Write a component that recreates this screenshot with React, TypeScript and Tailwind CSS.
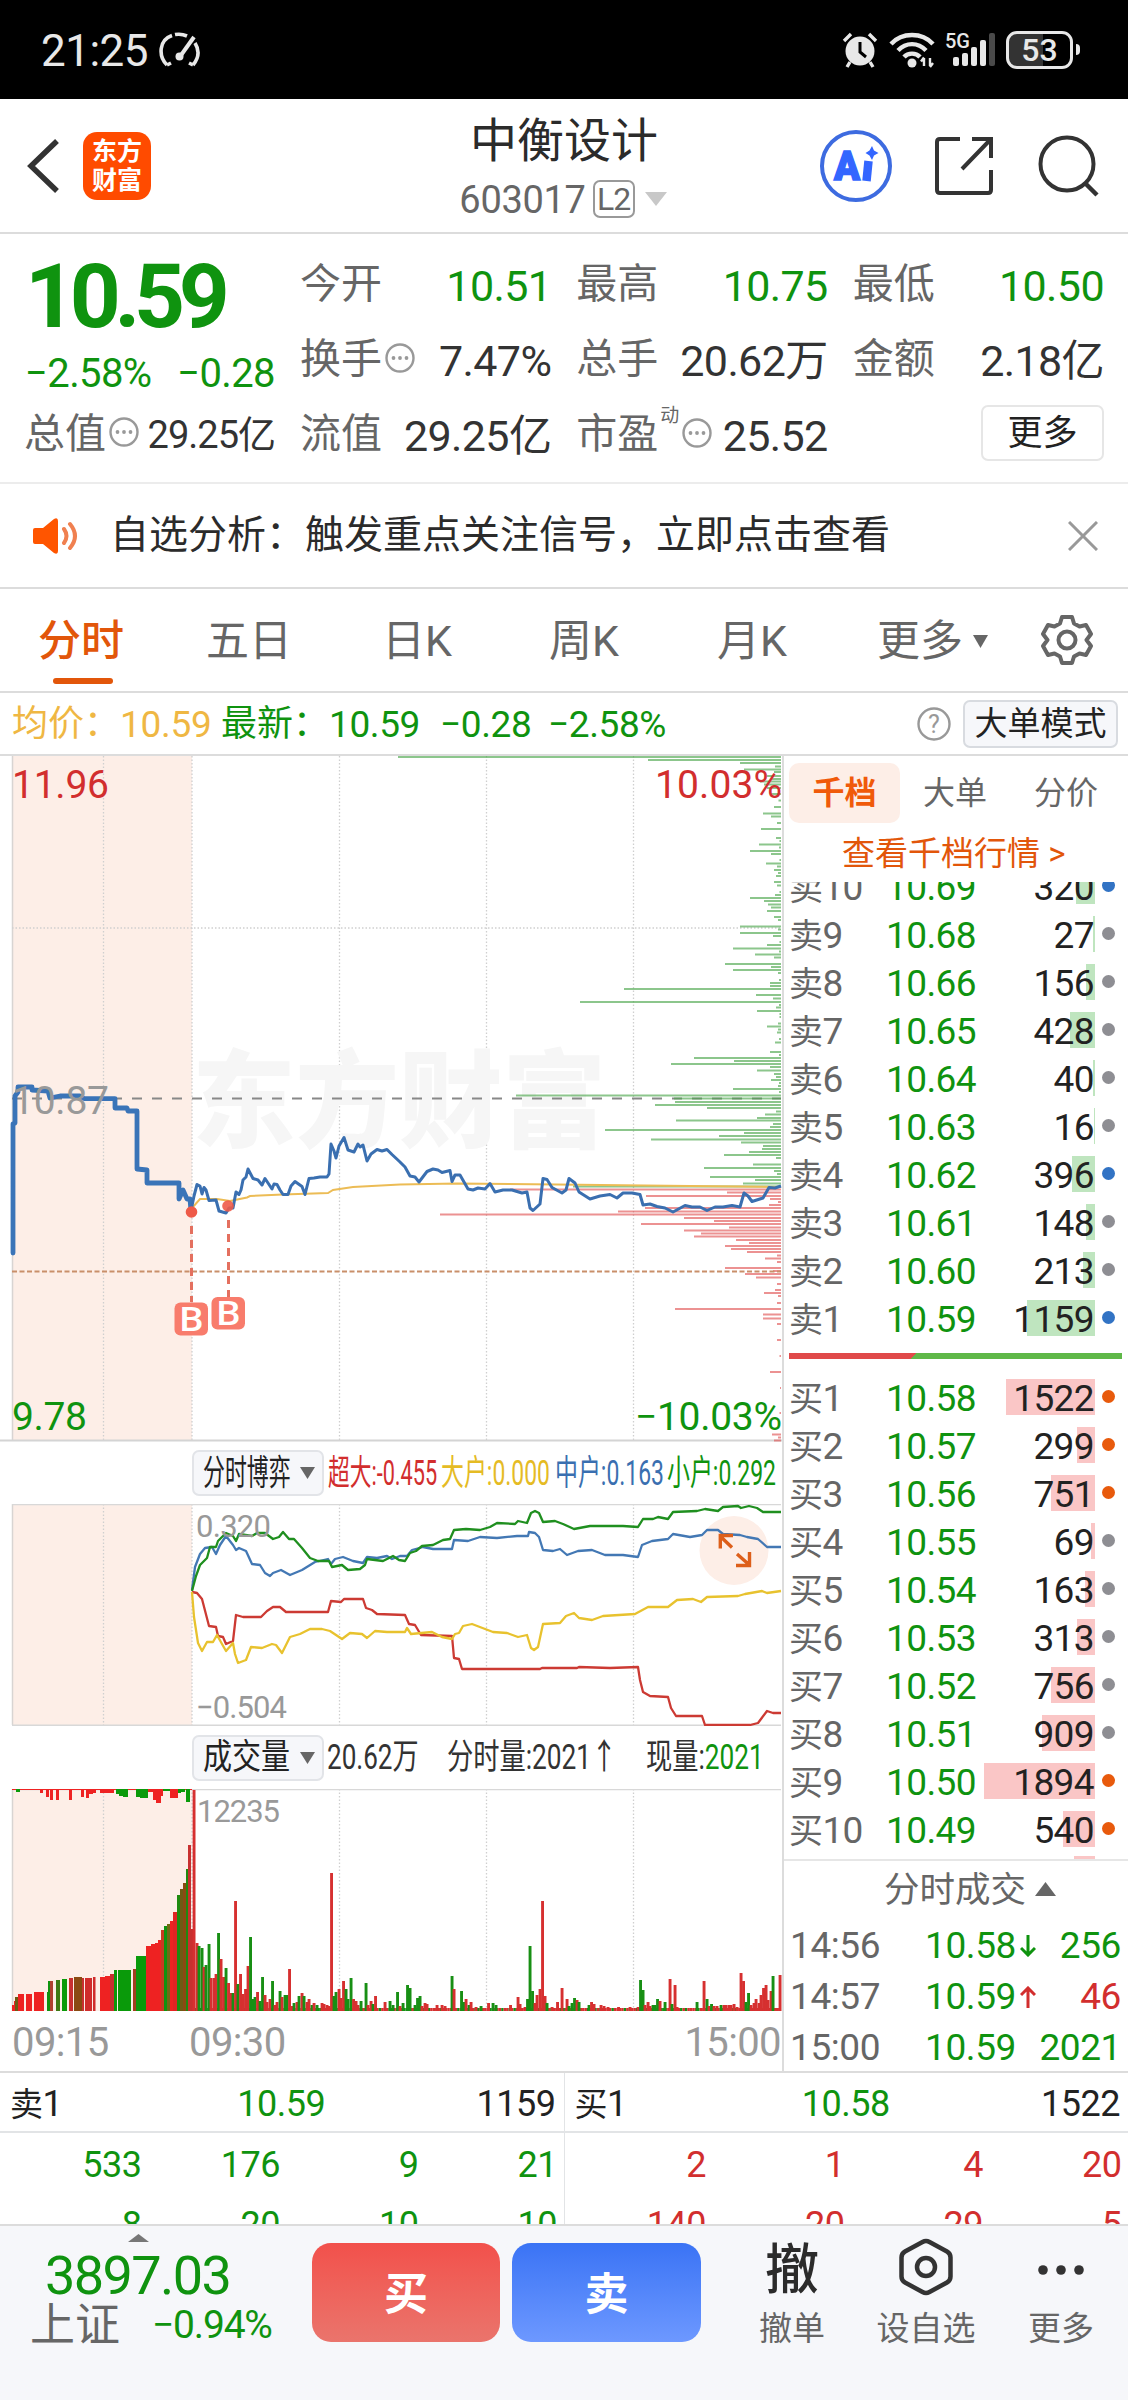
import type { ReactNode } from "react";
import clsx from "clsx";

type Bar = [number, number, "r" | "g"];
type Level = { label: string; price: string; volume: number; dot: "blue" | "gray" | "orange" };

const GREEN = "#0f930f";
const RED = "#d22e2e";

const asks: Level[] = [
  { label: "卖10", price: "10.69", volume: 320, dot: "blue" },
  { label: "卖9", price: "10.68", volume: 27, dot: "gray" },
  { label: "卖8", price: "10.66", volume: 156, dot: "gray" },
  { label: "卖7", price: "10.65", volume: 428, dot: "gray" },
  { label: "卖6", price: "10.64", volume: 40, dot: "gray" },
  { label: "卖5", price: "10.63", volume: 16, dot: "gray" },
  { label: "卖4", price: "10.62", volume: 396, dot: "blue" },
  { label: "卖3", price: "10.61", volume: 148, dot: "gray" },
  { label: "卖2", price: "10.60", volume: 213, dot: "gray" },
  { label: "卖1", price: "10.59", volume: 1159, dot: "blue" },
];

const bids: Level[] = [
  { label: "买1", price: "10.58", volume: 1522, dot: "orange" },
  { label: "买2", price: "10.57", volume: 299, dot: "orange" },
  { label: "买3", price: "10.56", volume: 751, dot: "orange" },
  { label: "买4", price: "10.55", volume: 69, dot: "gray" },
  { label: "买5", price: "10.54", volume: 163, dot: "gray" },
  { label: "买6", price: "10.53", volume: 313, dot: "gray" },
  { label: "买7", price: "10.52", volume: 756, dot: "gray" },
  { label: "买8", price: "10.51", volume: 909, dot: "gray" },
  { label: "买9", price: "10.50", volume: 1894, dot: "orange" },
  { label: "买10", price: "10.49", volume: 540, dot: "orange" },
];

// [y, width] of every price level with resting orders
const askDepth: [number, number][] = [
  [757, 383], [760, 133], [763, 41], [766.5, 6], [769.5, 37], [772, 7], [776, 14], [779, 9], [781.5, 21],
  [784.5, 17], [788, 14], [794, 10], [800.5, 2.5], [807, 7], [813.5, 18], [816.5, 10], [823, 4], [829, 20],
  [838, 5], [841, 1.5], [844.5, 22], [847.5, 2], [851, 31], [854, 10], [860, 1.5], [863.5, 15], [866.5, 4],
  [870, 7], [873, 3], [876, 5], [882, 7], [885.5, 4], [892, 1.5], [895, 6], [898, 31], [901, 17],
  [904.5, 13], [907.5, 10], [911, 14], [917, 7], [920, 3], [926.5, 41], [929.5, 3], [933, 41], [936, 8],
  [942, 1.5], [945, 14], [948.5, 48], [951.5, 2], [954.5, 26], [957.5, 7], [964, 56], [967, 10], [970, 48],
  [973, 3], [980, 2], [983, 11], [986, 11], [989, 157], [995, 25], [998.5, 8], [1002, 201], [1005, 2],
  [1007.5, 5], [1011, 24], [1014, 1.5], [1017, 1.5], [1023.5, 3], [1026.5, 14], [1029.5, 3], [1032.5, 4],
  [1039, 2], [1042.5, 6], [1052, 11], [1055, 2], [1058, 87], [1061, 47], [1064, 110], [1067, 11],
  [1070.5, 24], [1074, 7], [1077, 5], [1080, 10], [1083, 2], [1086, 3], [1089, 48], [1092, 2], [1095.5, 265],
  [1098.5, 107], [1102, 106], [1105, 126], [1108, 74], [1111.5, 5], [1114.5, 16], [1118, 24], [1120.5, 105],
  [1124, 8], [1127, 11], [1130, 176], [1133, 37], [1136, 62], [1139.5, 130], [1142.5, 40], [1146, 18],
  [1149, 19], [1152, 32], [1155, 57], [1158, 5], [1164.5, 28], [1168, 77], [1171, 7], [1174, 4], [1177, 71],
  [1180, 26], [1183.5, 38], [1186.5, 208],
];

const bidDepth: [number, number][] = [
  [1189.5, 271], [1192.5, 54], [1196, 135], [1199, 11], [1202, 3], [1205, 12], [1208, 136], [1211.5, 163],
  [1214.5, 341], [1218, 97], [1221, 67], [1224, 140], [1227.5, 52], [1230.5, 97], [1233.5, 80], [1236.5, 87],
  [1240, 45], [1243, 32], [1246, 56], [1249, 50], [1252, 34], [1255.5, 4], [1258.5, 16], [1262, 4],
  [1268, 56], [1271, 8], [1274, 36], [1277.5, 25], [1284, 4], [1290, 6], [1293, 17], [1296, 3], [1303, 4],
  [1309, 106], [1314.5, 18], [1318.5, 18], [1324, 4], [1340, 4], [1356, 1.5], [1372, 11], [1388, 1],
  [1413, 1.5], [1434.5, 9], [1437.5, 3], [1440.5, 7],
];

const auctionLine =
  "13,1253 13,1124 15,1123 15,1096 18,1092 18,1087 32,1087 32,1090 48,1091 50,1098 60,1096 80,1096 84,1098.6 115,1098.6 115,1108 127,1108 128,1111 137,1111 137,1169 147,1170 147,1183 179,1183 179,1199 183,1190 187,1199 190,1199 191,1211";

const priceLine =
  "191,1211 194,1196 197,1184.5 200,1186 202,1194 204,1187.5 206,1190 209,1200.5 216,1200 219,1211 226,1213 229,1208 233,1208 236,1192 239,1194.5 241,1190 243,1180 246,1177 248,1169 253,1178.5 258,1180 262,1185 265,1178.5 268,1183 272,1189 274,1184 277,1184.5 280,1190 283,1194.5 288,1194.5 291,1186 295,1181.5 302,1186.5 305,1194.5 309,1178.5 314,1178 320,1177 327,1177 329,1174 331,1144 334,1151 336,1158 339,1146 344,1137.5 348,1150 354,1152 358,1144 360,1147 363,1145 367,1161 371,1154 377,1149.5 382,1151 387,1149.5 392,1154.5 400,1162 405,1167 410,1176 415,1177 419,1182 427,1171.5 433,1169 438,1170 442,1172.5 450,1170.5 452,1181.5 455,1175 460,1175 468,1189 473,1190 478,1188 485,1189 490,1183.5 495,1192 503,1190 512,1190 522,1193 527,1192 530,1208 533,1210.5 540,1204 543,1178.5 547,1179.5 552,1187.5 562,1193 566,1190 569,1178.5 575,1183 579,1192 590,1199 600,1196 610,1194.5 617,1198 623,1193 632,1193 640,1194.5 643,1205 650,1204 657,1206.5 665,1208 673,1212 685,1205.5 692,1207 700,1207 707,1210.5 715,1207 723,1207 732,1205.5 740,1207 744,1193 748,1196 752,1201.5 763,1198 769,1187.5 775,1188 781,1186";

const averageLine =
  "192,1208 200,1199 217,1199 230,1201 247,1197.5 250,1196 283,1194.5 328,1193 333,1190 353,1187 400,1184.5 457,1183.5 557,1184.5 690,1186 781,1187";

const smallLine =
  "192,1591 196,1576 200,1565 207,1558 210,1547 216,1547 218,1541 226,1533 233,1536 236,1541 239,1534 252,1536 257,1533 265,1533 273,1539 279,1537 283,1532 289,1539 294,1539 302,1548 310,1558 318,1561 329,1561 332,1567 342,1565 348,1570 360,1569 365,1565 367,1559 383,1561 393,1556 399,1560 405,1561 410,1553 416,1551 422,1546 433,1545 443,1540 450,1539 454,1530 466,1529 480,1530 490,1527 497,1523 515,1524 518,1521 527,1523 531,1513 535,1511 539,1513 543,1522 555,1521 563,1524 574,1529 590,1526 623,1526 638,1527 643,1519 653,1519 658,1517 668,1519 673,1512 697,1511 705,1509 718,1511 723,1507 738,1506 741,1508 749,1506 757,1508 763,1512 781,1512";

const midLine =
  "192,1590 195,1567 200,1554 205,1548 212,1547 216,1554 220,1545 226,1536 233,1545 236,1550 239,1548 246,1551 252,1564 260,1565 265,1573 270,1576 273,1573 281,1570 290,1575 302,1570 315,1562 328,1559 331,1564 335,1559 343,1557 353,1561 363,1563 367,1557 377,1558 387,1556 392,1559 400,1556 407,1556 412,1550 423,1547 433,1549 452,1549 454,1540 468,1541 480,1537 497,1538 517,1536 528,1536 529,1532 535,1533 539,1537 543,1550 553,1551 560,1549 567,1555 578,1551 592,1550 605,1555 623,1555 638,1557 642,1545 652,1541 668,1539 673,1534 690,1537 702,1535 707,1530 718,1530 723,1534 740,1535 747,1537 758,1539 767,1547 781,1547";

const superLine =
  "192,1592 197,1593 202,1599 209,1626 216,1627 218,1636 223,1637 226,1644 233,1641 236,1615 243,1617 261,1617 267,1611 273,1607 280,1607 286,1612 328,1612 331,1601 341,1602 344,1599 363,1599 366,1608 372,1610 377,1614 405,1615 409,1624 415,1625 421,1635 452,1636 454,1658 459,1659 462,1669 540,1669 542,1668 577,1668 579,1667 610,1668 638,1667 640,1680 643,1692 650,1696 668,1697 671,1708 676,1716 702,1716 705,1725 750,1725 758,1723 767,1711 773,1713 781,1713";

const bigLine =
  "192,1592 194,1617 198,1643 202,1651 207,1642 213,1642 217,1635 222,1644 226,1651 233,1643 235,1654 238,1663 246,1660 251,1647 262,1648 272,1644 276,1645 282,1653 290,1637 300,1634 310,1629 322,1629 330,1631 342,1639 350,1633 362,1634 367,1638 375,1631 387,1632 405,1632 407,1628 411,1634 432,1632 442,1637 452,1639 455,1634 459,1633 463,1626 472,1624 493,1632 507,1633 518,1637 527,1635 531,1648 534,1650 538,1647 543,1624 560,1623 566,1616 574,1613 579,1618 592,1620 603,1616 635,1614 648,1607 668,1607 677,1600 693,1599 701,1602 707,1597 738,1596 745,1594 762,1591 767,1593 781,1591";

// call auction volume: [x, width, height, colour]
const auctionBars: [number, number, number, string][] = [
  [12, 2, 6, "#ee2222"], [14, 2, 10, "#ee2222"], [15, 3, 14, "#6b5a14"], [18, 6, 17, "#ee2222"],
  [26, 6, 17, "#ee2222"], [34, 10, 19, "#ee2222"], [47, 2, 19, "#0f930f"], [48, 2, 30, "#0f930f"],
  [50, 3, 30, "#b04030"], [56, 4, 31, "#3d7a14"], [62, 5, 32, "#0a9a0a"], [69, 4, 33, "#c83030"],
  [74, 8, 34, "#8a4a12"], [82, 2, 33, "#c83030"], [85, 7, 33, "#d02c2c"], [93, 2.5, 34, "#d02c2c"],
  [100, 5, 34, "#ee2222"], [105, 5, 35, "#ee2222"], [110, 4, 37, "#c83030"], [114, 3, 41, "#0a9a0a"],
  [118, 13, 41, "#0a9a0a"], [133, 3, 42, "#a04020"], [136, 10, 55, "#0a9a0a"], [146, 5, 65, "#ee2222"],
  [151, 4, 67, "#ee2222"], [155, 3, 68, "#ee2222"], [158, 3, 71, "#ee2222"], [161, 3, 81, "#c83a22"],
  [164, 3, 85, "#0f930f"], [167, 3, 87, "#6f6a14"], [170, 3, 90, "#ee2222"], [173, 4, 99, "#e02424"],
  [177, 3, 116, "#1f8a0f"], [180, 3, 122, "#6f5a14"], [183, 3, 128, "#8a4a12"], [186, 2, 142, "#1f8a0f"],
  [188, 3, 166, "#c83030"], [190.5, 2.5, 82, "#c83030"],
];

// unmatched auction volume, hanging from the top edge
const unmatchedBars: [number, number, number, "r" | "g"][] = [
  [12, 180, 1, "r"], [16, 4, 3, "g"], [40, 3, 4, "r"], [46, 3, 8, "r"], [50, 3, 11, "r"], [56, 3, 11, "r"],
  [69, 3, 11, "r"], [81, 3, 8, "r"], [86, 3, 9, "r"], [89, 4, 5, "r"], [93, 3, 4, "r"], [100, 14, 4, "r"],
  [116, 4, 5, "g"], [119, 4, 7, "g"], [123, 5, 8, "g"], [136, 4, 8, "g"], [140, 8, 9, "g"], [148, 5, 3, "r"],
  [153, 3, 11, "r"], [156, 5, 14, "r"], [161, 2, 7, "r"], [163, 8, 2, "g"], [170, 8, 9, "r"],
  [178, 3, 4, "g"], [181, 4, 3, "g"], [186, 4, 13, "g"],
];

const minuteBars: Bar[] = [
  [194, 221, "r"], [197, 68, "r"], [199, 65, "g"], [202, 63, "g"], [204, 44, "r"], [206, 46, "g"],
  [209, 67, "g"], [211, 33, "r"], [214, 33, "r"], [216, 37, "r"], [218.5, 78, "g"], [221, 52, "r"],
  [223.5, 34, "r"], [226, 43, "g"], [228.5, 28, "r"], [231, 18, "r"], [233, 18, "g"], [235.5, 110, "r"],
  [238, 27, "g"], [240.5, 37, "r"], [243, 17, "r"], [245.5, 22, "r"], [248, 45, "r"], [250.5, 74, "g"],
  [253, 12, "g"], [255, 14, "g"], [257.5, 19, "r"], [260, 10, "g"], [262.5, 34, "g"], [265, 16, "r"],
  [267, 9, "r"], [270, 12, "r"], [272.5, 30, "g"], [275, 6, "r"], [277, 9, "r"], [280, 20, "g"],
  [282, 14, "r"], [285, 16, "g"], [287, 16, "g"], [289.5, 42, "r"], [292, 5, "r"], [294, 8, "g"],
  [297, 9, "r"], [299, 15, "g"], [302, 18, "r"], [304, 15, "g"], [307, 9, "r"], [309, 12, "r"],
  [312, 6, "g"], [314, 8, "r"], [317, 6, "g"], [322, 8, "r"], [324, 7, "r"], [327, 6, "r"], [329, 5, "r"],
  [331.5, 138, "r"], [334, 15, "g"], [336, 19, "g"], [339, 22, "r"], [341, 13, "r"], [343.5, 30, "r"],
  [346, 22, "g"], [348, 12, "g"], [351, 33, "g"], [353.5, 12, "r"], [356, 10, "r"], [358, 6, "r"],
  [361, 10, "g"], [366, 28, "g"], [368, 6, "r"], [371, 10, "r"], [373, 7, "g"], [375.5, 15, "r"],
  [385, 9, "r"], [390, 10, "g"], [393, 6, "g"], [397.5, 19, "g"], [400, 5, "r"], [403, 8, "g"],
  [407.5, 26, "g"], [410, 23, "g"], [415, 6, "g"], [417.5, 13, "g"], [420, 15, "g"], [422, 5, "r"],
  [425, 8, "r"], [427, 7, "r"], [437, 6, "r"], [442, 6, "r"], [445, 5, "r"], [452, 35, "g"], [454, 22, "r"],
  [461.5, 20, "g"], [464, 9, "g"], [466, 12, "r"], [469, 6, "g"], [471, 9, "r"], [476, 4, "r"],
  [481, 5, "g"], [488.5, 8, "r"], [493, 8, "g"], [496, 6, "g"], [510.5, 6, "r"], [518, 14, "r"],
  [520, 7, "r"], [525, 4, "r"], [527.5, 12, "g"], [530, 65, "g"], [532.5, 20, "g"], [535, 8, "r"],
  [537, 16, "r"], [540, 22, "r"], [542.5, 110, "r"], [545, 15, "r"], [547, 8, "g"], [552, 4, "r"],
  [557.5, 9, "r"], [562, 23, "r"], [567, 12, "r"], [569, 5, "g"], [572, 8, "g"], [574.5, 13, "g"],
  [577, 11, "r"], [579, 9, "g"], [589, 6, "g"], [591.5, 9, "r"], [594, 7, "r"], [601, 6, "r"],
  [604, 5, "r"], [608, 4, "r"], [618.5, 4, "r"], [630, 4, "r"], [638, 4, "r"], [640.5, 31, "g"],
  [643, 21, "g"], [645, 6, "r"], [648, 9, "r"], [650, 5, "r"], [653, 6, "g"], [655, 6, "g"],
  [657.5, 12, "g"], [660, 10, "r"], [665, 9, "g"], [670, 32, "r"], [672, 7, "g"], [675, 26, "r"],
  [677, 4, "r"], [697, 9, "g"], [704, 30, "r"], [707, 12, "g"], [709, 5, "r"], [711.5, 7, "g"],
  [714, 5, "r"], [717, 5, "r"], [721, 6, "g"], [724, 6, "r"], [726, 6, "r"], [729, 6, "r"], [731, 6, "r"],
  [734, 7, "r"], [737, 4, "r"], [741, 38, "r"], [743.5, 30, "r"], [746, 9, "g"], [748.5, 18, "g"],
  [751, 6, "r"], [754, 8, "r"], [756, 12, "r"], [759, 8, "r"], [761, 16, "r"], [763.5, 23, "r"],
  [766, 26, "r"], [768, 11, "r"], [771, 20, "r"], [773, 35, "g"], [776, 3, "r"], [780, 36, "r"],
];

function StatusBar() {
  return (
    <div className="flex h-[99px] items-center bg-black pl-[41px] pr-[48px] text-[#e8e8e8]">
      <span className="pt-[2px] text-[44px] leading-none tracking-[-0.5px]">21:25</span>
      <svg className="ml-[11px] h-[36px] w-[42px]" viewBox="0 0 42 36" fill="none" stroke="#e8e8e8" strokeWidth="3.6">
        <path d="M8 33C-1 24 0 8 13 3.500M16 2.600C20 1.800 24 2.200 28 4" />
        <path d="M36 11C41 19 39 27 34 33M8 33L12 31M34 33L30 31" />
        <path d="M35 5L20 26" strokeWidth="4" />
        <circle cx="20.500" cy="24.500" r="4" fill="#e8e8e8" stroke="none" />
      </svg>
      <div className="ml-auto flex items-center">
        <svg className="h-[36px] w-[36px]" viewBox="0 0 36 36">
          <circle cx="18" cy="19" r="14.500" fill="#e8e8e8" />
          <path d="M2 9L9 2M34 9L27 2M8 30L5 35M28 30L31 35" stroke="#e8e8e8" strokeWidth="3.400" />
          <path d="M18 10V20L24 25" fill="none" stroke="#000" strokeWidth="3" />
        </svg>
        <svg className="ml-[11px] h-[36px] w-[46px]" viewBox="0 0 46 36" fill="none" stroke="#e8e8e8" strokeWidth="4.400">
          <path d="M2 12C13 0 33 0 44 12" />
          <path d="M9 18.500C17 10 29 10 37 18.500" />
          <path d="M15 25C19 20.500 27 20.500 31 25" />
          <circle cx="23" cy="31" r="4.500" fill="#e8e8e8" stroke="none" />
          <path d="M35 26V34M41 26V34M32 29.500L35 25.500M44 31L41 35" strokeWidth="2.400" />
        </svg>
        <svg className="ml-[10px] h-[38px] w-[52px]" viewBox="0 0 52 38">
          <text x="0" y="17" fontSize="21" fontWeight="500" fill="#e8e8e8" textLength="25" lengthAdjust="spacingAndGlyphs">5G</text>
          <rect x="8" y="26" width="6" height="9" rx="2" fill="#e8e8e8" />
          <rect x="17" y="22" width="6" height="13" rx="2" fill="#e8e8e8" />
          <rect x="26" y="16" width="6" height="19" rx="2" fill="#e8e8e8" />
          <rect x="35" y="9" width="6" height="26" rx="2" fill="#e8e8e8" />
          <rect x="44" y="2" width="6" height="33" rx="2" fill="#4a4a4a" />
        </svg>
        <div className="ml-[9px] flex h-[38px] w-[67px] items-center justify-center rounded-[11px] border-[3px] border-[#e8e8e8] bg-[linear-gradient(90deg,#333_55%,#000_55%)] text-[32px] font-medium leading-none">
          53
        </div>
        <div className="ml-[3px] h-[11px] w-[4px] rounded-r bg-[#e8e8e8]" />
      </div>
    </div>
  );
}

function Header() {
  return (
    <header className="flex h-[135px] items-center border-b-2 border-[#dcdcdc] px-[27px]">
      <svg className="h-[56px] w-[34px]" viewBox="0 0 34 56" fill="none" stroke="#333" strokeWidth="5.5">
        <path d="M30 3L4 28L30 53" />
      </svg>
      <div className="ml-[22px] flex h-[68px] w-[68px] flex-col items-center justify-center rounded-[14px] bg-[#ff4b00] text-[25px] font-bold leading-[29px] text-white">
        <span>东方</span>
        <span>财富</span>
      </div>
      <div className="flex w-[826px] flex-col items-center pt-[3px]">
        <h1 className="text-[47px] leading-[54px] text-[#2b2b2b]">中衡设计</h1>
        <div className="mt-[10px] flex items-center text-[38px] leading-[40px] text-[#666]">
          <span className="pt-[2px] tracking-[-0.3px]">603017</span>
          <span className="ml-[7px] flex h-[38px] w-[42px] items-center justify-center rounded-[7px] border-2 border-[#999] text-[32px] leading-none tracking-[-1px]">
            L2
          </span>
          <svg className="ml-[10px] mr-[2px] h-[14px] w-[22px]" viewBox="0 0 22 14">
            <path d="M0 0H22L11 14Z" fill="#c8c8c8" />
          </svg>
        </div>
      </div>
      <svg className="-ml-[158px] h-[74px] w-[74px] shrink-0" viewBox="0 0 74 74">
        <circle cx="37" cy="37" r="34" fill="#fff" stroke="#3d6be0" strokeWidth="4" />
        <text x="15" y="51" fontSize="40" fontWeight="900" fill="#3366ff" stroke="#3366ff" strokeWidth="1.5" textLength="26" lengthAdjust="spacingAndGlyphs">
          A
        </text>
        <path d="M49.500 32L47.500 52" stroke="#3366ff" strokeWidth="8.500" />
        <path d="M53 17L55 21.500L59.500 24L55 26.500L53 31L50.500 26.500L46.500 24L50.500 21.500Z" fill="#3366ff" />
      </svg>
      <svg className="ml-[41px] h-[60px] w-[60px] shrink-0" viewBox="0 0 60 60" fill="none" stroke="#333" strokeWidth="4">
        <path d="M26 3H6Q3 3 3 6V54Q3 57 6 57H54Q57 57 57 54V34" />
        <path d="M38 3H57V22M57 3L28 33" />
      </svg>
      <svg className="ml-[44px] h-[62px] w-[62px] shrink-0" viewBox="0 0 62 62" fill="none" stroke="#333" strokeWidth="4">
        <circle cx="29" cy="29" r="26.500" />
        <path d="M47 48L59 60" strokeWidth="4.500" />
      </svg>
    </header>
  );
}

function InfoDots() {
  return (
    <svg className="h-[30px] w-[30px] shrink-0" viewBox="0 0 30 30">
      <circle cx="15" cy="15" r="13.500" fill="none" stroke="#999" strokeWidth="2.4" />
      <circle cx="8.500" cy="15" r="1.900" fill="#999" />
      <circle cx="15" cy="15" r="1.900" fill="#999" />
      <circle cx="21.500" cy="15" r="1.900" fill="#999" />
    </svg>
  );
}

function Stat({ label, info, sup, value, green }: { label: string; info?: boolean; sup?: string; value?: string; green?: boolean }) {
  return (
    <div className="flex h-[75px] items-center">
      <span className="text-[41px] text-[#666]">{label}</span>
      {sup && <span className="mb-[38px] ml-[2px] text-[19px] text-[#666]">{sup}</span>}
      {info && <span className="mb-[4px] ml-[3px]"><InfoDots /></span>}
      <span className={clsx("ml-auto pt-[3px] text-[43px] tracking-[-0.6px]", green ? "text-[#0f930f]" : "text-[#333]")}>{value}</span>
    </div>
  );
}

function Quote() {
  return (
    <section className="flex h-[250px] border-b-2 border-[#ececec] pl-[25px] pt-[13px] leading-none">
      <div className="w-[250px] text-[#0f930f]">
        <div className="flex h-[98px] items-center text-[89px] font-bold tracking-[-6.3px]">10.59</div>
        <div className="flex h-[54px] items-center justify-between pt-[3px] text-[40px] tracking-[-0.6px]">
          <span>−2.58%</span>
          <span>−0.28</span>
        </div>
        <div className="-ml-px flex h-[70px] items-center">
          <span className="text-[41px] text-[#666]">总值</span>
          <span className="mb-[4px] ml-[3px]"><InfoDots /></span>
          <span className="ml-auto whitespace-nowrap pt-px text-[38px] tracking-[-1px] text-[#333]">29.25亿</span>
        </div>
      </div>
      <div className="ml-[25px] grid w-[804px] grid-cols-3 content-start gap-x-[25px]">
        <Stat label="今开" value="10.51" green />
        <Stat label="最高" value="10.75" green />
        <Stat label="最低" value="10.50" green />
        <Stat label="换手" info value="7.47%" />
        <Stat label="总手" value="20.62万" />
        <Stat label="金额" value="2.18亿" />
        <Stat label="流值" value="29.25亿" />
        <Stat label="市盈" sup="动" info value="25.52" />
        <div className="flex h-[72px] items-center justify-end">
          <button className="h-[56px] w-[123px] rounded-[7px] border-2 border-[#e6e6e6] text-[35px] leading-none text-[#222]">更多</button>
        </div>
      </div>
    </section>
  );
}

function Notice() {
  return (
    <div className="flex h-[105px] items-center border-b-2 border-[#dcdcdc] pl-[33px] pr-[30px]">
      <svg className="h-[38px] w-[46px]" viewBox="0 0 46 38">
        <path d="M2 11H10L21 2Q25 0 25 4V34Q25 38 21 36L10 27H2Q0 27 0 25V13Q0 11 2 11Z" fill="#ff5500" />
        <path d="M31 12Q36 19 31 26M37 7Q47 19 37 31" fill="none" stroke="#f08050" strokeWidth="4" strokeLinecap="round" />
      </svg>
      <span className="ml-[31px] text-[39px] leading-none text-[#2b2b2b]">自选分析：触发重点关注信号，立即点击查看</span>
      <svg className="ml-auto h-[30px] w-[30px]" viewBox="0 0 30 30" stroke="#999" strokeWidth="3">
        <path d="M1 1L29 29M29 1L1 29" />
      </svg>
    </div>
  );
}

function PeriodTabs() {
  return (
    <nav className="flex h-[104px] items-center border-b-2 border-[#dcdcdc] pt-[2px] text-[43px] leading-none text-[#666]">
      <div className="relative ml-[38px] w-[168px] font-medium text-[#e2560a]">
        分时
        <span className="absolute left-[15px] top-[58px] h-[6px] w-[60px] rounded-full bg-[#e2560a]" />
      </div>
      <div className="w-[176px]">五日</div>
      <div className="w-[167px]">日K</div>
      <div className="w-[168px]">周K</div>
      <div className="w-[160px]">月K</div>
      <div className="flex w-[164px] items-center">
        更多
        <svg className="ml-[10px] h-[13px] w-[15px]" viewBox="0 0 15 13">
          <path d="M0 0H15L7.500 13Z" fill="#666" />
        </svg>
      </div>
      <svg className="-mt-[2px] h-[52px] w-[52px]" viewBox="0 0 52 52" fill="none" stroke="#666" strokeWidth="4" strokeLinejoin="round">
        <path d="M21 3H31L33 9.500L38.500 12.500L45 11L50 20L45.500 26L50 32L45 41L38.500 39.500L33 42.500L31 49H21L19 42.500L13.500 39.500L7 41L2 32L6.500 26L2 20L7 11L13.500 12.500L19 9.500Z" />
        <circle cx="26" cy="26" r="8.500" />
      </svg>
    </nav>
  );
}

function PriceBar() {
  return (
    <div className="flex h-[63px] items-center border-b-2 border-[#dcdcdc] pl-[12px] pr-[10px] text-[37px] leading-none">
      <div className="flex w-[209px] pt-[2px] text-[#efb743]">
        <span className="w-[108px] whitespace-nowrap text-[36px]">均价：</span>
        <span className="tracking-[-0.3px]">10.59</span>
      </div>
      <div className="flex pt-[2px] tracking-[-0.4px] text-[#0f930f]">
        <span className="w-[108px] whitespace-nowrap text-[36px] tracking-normal">最新：</span>
        <span className="w-[111px]">10.59</span>
        <span className="w-[108px]">−0.28</span>
        <span>−2.58%</span>
      </div>
      <svg className="ml-auto h-[34px] w-[34px]" viewBox="0 0 34 34">
        <circle cx="17" cy="17" r="15.500" fill="none" stroke="#999" strokeWidth="2.400" />
        <text x="17" y="26" fontSize="25" textAnchor="middle" fill="#999">?</text>
      </svg>
      <div className="ml-[12px] flex h-[48px] w-[155px] items-center justify-center rounded-[7px] border-2 border-[#d8dbe0] bg-[#f6f7fa] text-[33px] text-[#222]">
        大单模式
      </div>
    </div>
  );
}

function GridLines({ top, bottom }: { top: number; bottom: number }) {
  return (
    <g>
      <rect x="12" y={top} width="180" height={bottom - top} fill="#fdeee7" />
      {[103.5, 192, 339.5, 486.5, 633.5].map((x) => (
        <path key={x} d={`M${x} ${top}V${bottom}`} stroke="#cfcfcf" strokeWidth="1.3" strokeDasharray="1.5 2" />
      ))}
      <path d={`M12.500 ${top}V${bottom}`} stroke="#d8d4d2" strokeWidth="1.5" />
    </g>
  );
}

function PriceChart() {
  return (
    <svg className="block h-[686px] w-[782px]" viewBox="0 756 782 686" fill="none">
      <GridLines top={756} bottom={1440} />
      <text x="192" y="1139" fontSize="106" fontWeight="900" fill="#f6f6f6" textLength="414" lengthAdjust="spacingAndGlyphs">
        东方财富
      </text>
      <path d="M12 928H781" stroke="#cfcfcf" strokeWidth="1.3" strokeDasharray="1.5 2" />
      <path d="M12 1098.600H781" stroke="#888" strokeWidth="2" strokeDasharray="10 10" />
      <path d="M0 1440.600H782" stroke="#d4d4d4" strokeWidth="2" />
      <g fill="#4fa84f" fillOpacity="0.65">
        {askDepth.map(([y, w]) => (
          <rect key={y} x={781 - w} y={y - 1} width={w} height="2" />
        ))}
      </g>
      <g fill="#e04a4a" fillOpacity="0.6">
        {bidDepth.map(([y, w]) => (
          <rect key={y} x={781 - w} y={y - 1} width={w} height="2" />
        ))}
      </g>
      <path d="M12 1271.600H781" stroke="#c98f6a" strokeWidth="2" strokeDasharray="5 2.500" />
      <polyline points={averageLine} stroke="#ecbc55" strokeWidth="2" />
      <polyline points={auctionLine} stroke="#3a74b8" strokeWidth="4.8" strokeLinejoin="round" strokeLinecap="round" />
      <polyline points={priceLine} stroke="#3a6fb0" strokeWidth="3" strokeLinejoin="round" />
      <g stroke="#e4705f" strokeWidth="3" strokeDasharray="8 6">
        <path d="M191.500 1226V1302" />
        <path d="M228.500 1220V1297" />
      </g>
      <circle cx="191.500" cy="1212" r="5.800" fill="#ee5a48" />
      <circle cx="228" cy="1206" r="5.800" fill="#ee5a48" fillOpacity="0.9" />
      <rect x="174.500" y="1302.500" width="33.500" height="33" rx="6" fill="#f87c6c" />
      <rect x="211.500" y="1297" width="33.500" height="32.500" rx="6" fill="#f87c6c" />
      <g fontSize="33" fontWeight="500" fill="#fff">
        <text x="179.500" y="1330.500" textLength="24" lengthAdjust="spacingAndGlyphs">B</text>
        <text x="216.500" y="1324.500" textLength="24" lengthAdjust="spacingAndGlyphs">B</text>
      </g>
      <g fontSize="39">
        <text x="12" y="798" fill={RED} textLength="97">11.96</text>
        <text x="12" y="1113.500" fill="#999" textLength="97">10.87</text>
        <text x="12" y="1430" fill={GREEN} textLength="75">9.78</text>
        <text x="655" y="798" fill={RED} textLength="127">10.03%</text>
        <text x="635" y="1430" fill={GREEN} textLength="147">−10.03%</text>
      </g>
    </svg>
  );
}

function IndicatorButton({ children }: { children: ReactNode }) {
  return (
    <div className="flex h-[46px] w-[132px] shrink-0 items-center rounded-[7px] border-2 border-[#e2e4e8] bg-[#f6f7fa] pl-[9px] text-[#222]">
      <span className="w-[87px] shrink-0">{children}</span>
      <svg className="ml-[10px] h-[12px] w-[15px]" viewBox="0 0 15 12">
        <path d="M0 0H15L7.500 12Z" fill="#666" />
      </svg>
    </div>
  );
}

function GameChart() {
  return (
    <div>
      <div className="flex h-[62px] items-center whitespace-nowrap pl-[192px] text-[35px] leading-none">
        <IndicatorButton>
          <span className="inline-block origin-left scale-x-[0.625]">分时博弈</span>
        </IndicatorButton>
        <span className="ml-[4px] w-[113px] shrink-0 text-[#d22e2e]"><span className="inline-block origin-left scale-x-[0.62]">超大:-0.455</span></span>
        <span className="w-[114px] shrink-0 text-[#e5bb24]"><span className="inline-block origin-left scale-x-[0.655]">大户:0.000</span></span>
        <span className="w-[112px] shrink-0 text-[#3a6fb0]"><span className="inline-block origin-left scale-x-[0.655]">中户:0.163</span></span>
        <span className="w-[108px] shrink-0 text-[#0f930f]"><span className="inline-block origin-left scale-x-[0.655]">小户:0.292</span></span>
      </div>
      <svg className="block h-[222px] w-[782px]" viewBox="0 1504 782 222" fill="none">
        <GridLines top={1504} bottom={1725} />
        <path d="M12 1504.500H781M12 1725.300H781" stroke="#d8d8d8" strokeWidth="1.5" />
        <circle cx="734" cy="1550.500" r="34.500" fill="#fdeee7" />
        <g strokeWidth="2.3" strokeLinejoin="round">
          <polyline points={midLine} stroke="#4378b4" />
          <polyline points={smallLine} stroke="#1f8f1f" />
          <polyline points={superLine} stroke="#cc3a33" />
          <polyline points={bigLine} stroke="#e8c22e" />
        </g>
        <path d="M732 1547.500L720 1536M720.300 1548.500V1535.500H733M737 1554L750 1565.500M749.500 1552V1565.500H736" stroke="#dd5f1a" strokeWidth="3.400" />
        <g fontSize="31" fill="#999">
          <text x="196" y="1537" textLength="75">0.320</text>
          <text x="196" y="1718" textLength="91">−0.504</text>
        </g>
      </svg>
    </div>
  );
}

function VolumeChart() {
  const fills = { r: "#d63030", g: "#188f14" };
  return (
    <div>
      <div className="flex h-[63px] items-center whitespace-nowrap pl-[192px] text-[35px] leading-none text-[#333]">
        <IndicatorButton>
          <span className="inline-block origin-left scale-x-[0.83]">成交量</span>
        </IndicatorButton>
        <span className="ml-[3px] w-[120px] shrink-0"><span className="inline-block origin-left scale-x-[0.745]">20.62万</span></span>
        <span className="w-[199px] shrink-0"><span className="inline-block origin-left scale-x-[0.75]">分时量:2021↑</span></span>
        <span className="shrink-0">
          <span className="inline-block origin-left scale-x-[0.75]">现量:<span className="text-[#0f930f]">2021</span></span>
        </span>
      </div>
      <svg className="block h-[222px] w-[782px]" viewBox="0 1789 782 222">
        <GridLines top={1789} bottom={2011} />
        <path d="M12 1789.600H781" stroke="#d8d8d8" strokeWidth="1.5" />
        {auctionBars.map(([x, w, h, c]) => (
          <rect key={x} x={x} y={2011 - h} width={w} height={h} fill={c} />
        ))}
        {unmatchedBars.map(([x, w, h, c]) => (
          <rect key={x} x={x} y="1789" width={w} height={h} fill={c === "r" ? "#ee2222" : "#0a9a0a"} />
        ))}
        {Array.from({ length: 240 }, (_, i) => (
          <rect key={i} x={192.5 + i * 2.45} y="2008" width="2.45" height="3" fill={i % 5 === 1 || i % 7 === 3 ? fills.g : fills.r} />
        ))}
        {minuteBars.map(([x, h, c]) => (
          <rect key={x} x={x - 1.4} y={2011 - h} width="2.9" height={h} fill={fills[c]} />
        ))}
        <text x="197" y="1822" fontSize="31" fill="#999" textLength="83">12235</text>
      </svg>
      <div className="flex h-[61px] items-center pl-[12px] pr-px pt-[2px] text-[40px] leading-none tracking-[-0.6px] text-[#999]">
        <span className="w-[177px]">09:15</span>
        <span>09:30</span>
        <span className="ml-auto">15:00</span>
      </div>
    </div>
  );
}

const dotColors = { blue: "bg-[#3273c4]", gray: "bg-[#8e8e93]", orange: "bg-[#e85a0c]" };

function LevelRow({ level, side }: { level: Level; side: "ask" | "bid" }) {
  return (
    <div className="flex h-[48px] shrink-0 items-center pl-[5px] text-[37px] leading-none tracking-[-0.6px]">
      <span className="w-[97px] pt-[3px] text-[#666]"><span className="text-[34px]">{level.label[0]}</span>{level.label.slice(1)}</span>
      <span className="pt-[3px] text-[#0f930f]">{level.price}</span>
      <div className="relative ml-auto flex h-[36px] w-[114px] items-center justify-end text-[#222]">
        <span
          className={clsx("absolute right-0 top-0 h-[36px]", side === "ask" ? "bg-[#bfe5bf]" : "bg-[#fac6c6]")}
          style={{ width: level.volume * 0.0586 }}
        />
        <span className="relative pr-px pt-[3px]">{level.volume}</span>
      </div>
      <span className={clsx("mb-[2px] ml-[7px] mr-[13px] h-[13px] w-[13px] rounded-full", dotColors[level.dot])} />
    </div>
  );
}

function TradeRow({ time, price, volume, dir }: { time: string; price: string; volume: string; dir?: "up" | "down" }) {
  return (
    <div className="flex h-[51px] items-center pl-[6px] pr-[7px] pt-[4px] text-[37px] leading-none tracking-[-0.4px] text-[#0f930f]">
      <span className="w-[135px] text-[#666]">{time}</span>
      <span className="w-[95px]">{price}</span>
      {dir && (
        <svg className="h-[22px] w-[16px]" viewBox="0 0 16 22" fill="none" stroke={dir === "up" ? RED : GREEN} strokeWidth="3">
          <path d={dir === "up" ? "M8 22V2M1 9L8 2L15 9" : "M8 0V20M1 13L8 20L15 13"} />
        </svg>
      )}
      <span className={clsx("ml-auto", dir === "up" && "text-[#d22e2e]")}>{volume}</span>
    </div>
  );
}

function OrderBook() {
  return (
    <aside className="flex w-[346px] flex-col border-l-2 border-[#dcdcdc]">
      <div className="flex h-[72px] items-center pl-[5px] pt-[2px] text-[32px] leading-none text-[#666]">
        <div className="flex h-[60px] w-[111px] items-center justify-center rounded-[10px] bg-[#fdeee7] font-bold text-[#f05a0a]">千档</div>
        <span className="ml-[23px]">大单</span>
        <span className="ml-[47px]">分价</span>
      </div>
      <div className="flex h-[54px] items-center pb-[3px] pl-[58px] text-[33px] leading-none text-[#e2560a]">查看千档行情 &gt;</div>
      <div className="flex h-[461px] flex-col justify-end overflow-hidden">
        {asks.map((level) => (
          <LevelRow key={level.label} level={level} side="ask" />
        ))}
      </div>
      <div className="ml-[5px] mt-[11px] h-[6px] w-[333px] shrink-0 bg-[linear-gradient(135deg,#e04a4a_37.5%,#5fb848_37.5%)]" />
      <div className="mt-[14px] flex h-[488px] shrink-0 flex-col overflow-hidden border-b-2 border-[#e6e6e6]">
        {bids.map((level) => (
          <LevelRow key={level.label} level={level} side="bid" />
        ))}
        <div className="mr-[33px] mt-[3px] h-[36px] w-[21px] shrink-0 self-end bg-[#fac6c6]" />
      </div>
      <div className="flex h-[57px] shrink-0 items-center pl-[100px] pt-[2px] text-[35.500px] leading-none text-[#666]">
        分时成交
        <svg className="mb-[4px] ml-[9px] h-[14px] w-[21px]" viewBox="0 0 21 14">
          <path d="M0 14H21L10.500 0Z" fill="#666" />
        </svg>
      </div>
      <TradeRow time="14:56" price="10.58" volume="256" dir="down" />
      <TradeRow time="14:57" price="10.59" volume="46" dir="up" />
      <TradeRow time="15:00" price="10.59" volume="2021" />
    </aside>
  );
}

function QueueSide({ side, price, total, rows, color }: { side: string; price: string; total: string; rows: string[][]; color: string }) {
  return (
    <div className="w-[564px] text-[36px] leading-none tracking-[-0.5px]">
      <div className="flex h-[60px] items-center justify-between border-b-2 border-[#e2e4e6] pl-[10px] pr-[8px] pt-[3px] text-[#222]">
        <span className="w-[102px]"><span className="text-[33px]">{side[0]}</span>{side[1]}</span>
        <span className="text-[#0f930f]">{price}</span>
        <span className="w-[105px] text-right">{total}</span>
      </div>
      {rows.map((row, i) => (
        <div key={i} className={clsx("flex h-[60px] items-center pl-[3px] pt-[3px] text-right", color)}>
          {row.map((n, j) => (
            <span key={j} className="w-[138.5px]">{n}</span>
          ))}
        </div>
      ))}
    </div>
  );
}

function BottomBar() {
  return (
    <footer className="flex h-[176px] border-t-2 border-[#dcdcdc] bg-[#f6f7fa] leading-none">
      <div className="w-[312px] pl-[30px] pt-[8px]">
        <svg className="ml-[98px] h-[8px] w-[21px]" viewBox="0 0 21 8">
          <path d="M0 8H21L10.500 0Z" fill="#777" />
        </svg>
        <div className="mt-[7px] pl-[15px] text-[54px] tracking-[-1.6px] text-[#0f930f]">3897.03</div>
        <div className="flex items-center">
          <span className="text-[45px] text-[#666]">上证</span>
          <span className="ml-[32px] text-[39px] tracking-[-1.2px] text-[#0f930f]">−0.94%</span>
        </div>
      </div>
      <button className="mt-[17px] h-[99px] w-[188px] rounded-[19px] bg-gradient-to-b from-[#f2504b] to-[#ea746c] pt-[4px] text-[44px] font-bold text-white">买</button>
      <button className="ml-[12px] mt-[17px] h-[99px] w-[189px] rounded-[19px] bg-gradient-to-b from-[#3a73f5] to-[#6d98ff] pt-[4px] text-[44px] font-bold text-white">卖</button>
      <div className="ml-[58px] flex w-[66px] flex-col items-center pt-[18px] text-[#666]">
        <span className="text-[54px] font-medium text-[#2b2b2b]">撤</span>
        <span className="mt-[14px] text-[33px]">撤单</span>
      </div>
      <div className="ml-[51px] flex w-[100px] flex-col items-center pt-[12px] text-[#666]">
        <svg className="h-[58px] w-[54px]" viewBox="0 0 54 58" fill="none" stroke="#333" strokeWidth="4.500" strokeLinejoin="round">
          <path d="M23.500 4Q27 2 30.500 4L48 13.500Q51.500 15.500 51.500 19.500V38.500Q51.500 42.500 48 44.500L30.500 54Q27 56 23.500 54L6 44.500Q2.500 42.500 2.500 38.500V19.500Q2.500 15.500 6 13.500Z" />
          <circle cx="27" cy="29" r="9" />
        </svg>
        <span className="mt-[16px] text-[33px]">设自选</span>
      </div>
      <div className="ml-[50px] flex w-[70px] flex-col items-center pt-[38px] text-[#666]">
        <svg className="h-[12px] w-[48px]" viewBox="0 0 48 12" fill="#333">
          <circle cx="6" cy="6" r="4.800" />
          <circle cx="24" cy="6" r="4.800" />
          <circle cx="42" cy="6" r="4.800" />
        </svg>
        <span className="mt-[36px] text-[33px]">更多</span>
      </div>
    </footer>
  );
}

function App() {
  return (
    <div className="h-[2400px] w-[1128px] overflow-hidden bg-white font-[Roboto,'Noto_Sans_CJK_SC',sans-serif]">
      <StatusBar />
      <Header />
      <Quote />
      <Notice />
      <PeriodTabs />
      <PriceBar />
      <div className="flex h-[1317px] border-b-2 border-[#dcdcdc]">
        <div className="w-[782px]">
          <PriceChart />
          <GameChart />
          <VolumeChart />
        </div>
        <OrderBook />
      </div>
      <div className="flex h-[151px] overflow-hidden">
        <QueueSide side="卖1" price="10.59" total="1159" color="text-[#0f930f]" rows={[["533", "176", "9", "21"], ["8", "20", "10", "10"]]} />
        <div className="w-px bg-[#e2e4e6]" />
        <QueueSide side="买1" price="10.58" total="1522" color="text-[#d22e2e]" rows={[["2", "1", "4", "20"], ["140", "20", "29", "5"]]} />
      </div>
      <BottomBar />
    </div>
  );
}

export default App;
